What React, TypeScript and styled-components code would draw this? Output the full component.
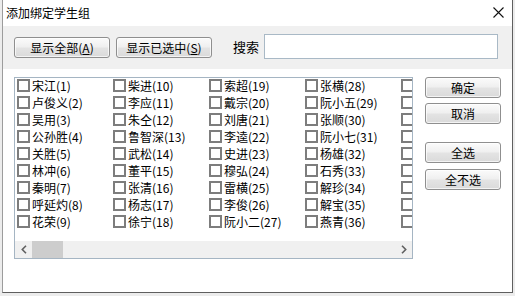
import React from 'react';
import styled, { createGlobalStyle } from 'styled-components';

const GlobalStyle = createGlobalStyle`
  html, body {
    margin: 0;
    padding: 0;
    background-color: #ececec;
    font-family: 'Noto Sans CJK SC', 'Noto Sans', sans-serif;
    font-size: 12px;
    color: #000;
  }
`;

const names = [
  '宋江', '卢俊义', '吴用', '公孙胜', '关胜', '林冲', '秦明', '呼延灼', '花荣',
  '柴进', '李应', '朱仝', '鲁智深', '武松', '董平', '张清', '杨志', '徐宁',
  '索超', '戴宗', '刘唐', '李逵', '史进', '穆弘', '雷横', '李俊', '阮小二',
  '张横', '阮小五', '张顺', '阮小七', '杨雄', '石秀', '解珍', '解宝', '燕青',
  '朱武', '黄信', '孙立', '宣赞', '郝思文', '韩滔', '彭玘', '单廷珪', '魏定国',
];

const Window = styled.div`
  box-sizing: border-box;
  margin-left: 2px;
  width: 511px;
  height: 293px;
  display: flex;
  flex-direction: column;
  background-color: #fff;
  border-left: 1px solid #9c9c9c;
  border-right: 1px solid #5f5f5f;
  border-bottom: 1px solid #5f5f5f;
`;

const TitleBar = styled.div`
  height: 26px;
  display: flex;
  flex-direction: row;
  align-items: center;
  justify-content: space-between;
  padding: 0 8px 0 3px;
  background-color: #fff;
`;

const Title = styled.span`
  font-size: 12px;
  line-height: 18px;
  margin-top: -1px;
`;

const CloseButton = styled.div`
  width: 12px;
  height: 12px;
  display: flex;
  align-items: center;
  justify-content: center;
  margin-top: -1px;
`;

const Toolbar = styled.div`
  height: 43px;
  display: flex;
  flex-direction: row;
  align-items: center;
  padding-left: 11px;
  background-color: #f0f0f0;
`;

const Button = styled.div<{ $width: number; $mt?: number }>`
  box-sizing: border-box;
  width: ${(p) => p.$width}px;
  height: 21px;
  margin-top: ${(p) => p.$mt ?? 0}px;
  display: flex;
  align-items: center;
  justify-content: center;
  border: 1px solid #8f8f8f;
  border-radius: 3px;
  background: linear-gradient(#fbfbfb 0%, #f0f0f0 45%, #e3e3e3 55%, #dadada 100%);
  box-shadow: inset 0 0 0 1px rgba(255, 255, 255, 0.7);
  font-size: 12px;
  line-height: 17px;
  white-space: nowrap;
  cursor: pointer;

  u {
    text-decoration-thickness: 1px;
    text-underline-offset: 1px;
  }
`;

const ToolGap = styled.div<{ $w: number }>`
  width: ${(p) => p.$w}px;
`;

const SearchLabel = styled.span`
  font-size: 13px;
  line-height: 18px;
  margin-top: -2px;
`;

const SearchInput = styled.input`
  box-sizing: border-box;
  width: 234px;
  height: 25px;
  margin-left: 5px;
  margin-top: -2px;
  border: 1px solid #a9b9c6;
  background-color: #fff;
  outline: none;
  padding: 0 4px;
  font-family: inherit;
  font-size: 12px;
`;

const Content = styled.div`
  flex: 1;
  display: flex;
  flex-direction: row;
  align-items: flex-start;
  padding: 8px 0 0 11px;
`;

const ListBox = styled.div`
  box-sizing: border-box;
  width: 399px;
  height: 182px;
  display: flex;
  flex-direction: column;
  border: 1px solid #a5b5c3;
  background-color: #fff;
`;

const Viewport = styled.div`
  flex: 1;
  overflow: hidden;
  padding: 0 0 0 2px;
`;

const ItemGrid = styled.div`
  display: grid;
  grid-auto-flow: column;
  grid-template-rows: repeat(9, 17px);
  grid-auto-columns: 96px;
  margin-top: -1px;
`;

const Item = styled.div`
  display: flex;
  flex-direction: row;
  align-items: center;
  white-space: nowrap;
`;

const CheckBox = styled.div`
  box-sizing: border-box;
  flex: none;
  width: 13px;
  height: 13px;
  border: 2px solid #7d7d7d;
  background-color: #fff;
  margin-right: 2px;
`;

const ItemLabel = styled.span`
  font-size: 12px;
  line-height: 17px;
`;

const HScrollbar = styled.div`
  height: 17px;
  display: flex;
  flex-direction: row;
  align-items: stretch;
  background-color: #f0f0f0;
`;

const ArrowButton = styled.div`
  width: 17px;
  display: flex;
  align-items: center;
  justify-content: center;
`;

const Track = styled.div`
  flex: 1;
  display: flex;
  flex-direction: row;
`;

const Thumb = styled.div`
  width: 31px;
  background-color: #cdcdcd;
`;

const SidePanel = styled.div`
  display: flex;
  flex-direction: column;
  margin-left: 12px;
`;

const Chevron: React.FC<{ dir: 'left' | 'right' }> = ({ dir }) => (
  <svg width="6" height="9" viewBox="0 0 6 9">
    <path
      d={dir === 'left' ? 'M5 0.8 L1.3 4.5 L5 8.2' : 'M1 0.8 L4.7 4.5 L1 8.2'}
      fill="none"
      stroke="#606060"
      strokeWidth="1.6"
    />
  </svg>
);

const App: React.FC = () => {
  return (
    <>
      <GlobalStyle />
      <Window>
        <TitleBar>
          <Title>添加绑定学生组</Title>
          <CloseButton>
            <svg width="11" height="11" viewBox="0 0 11 11">
              <path d="M0.5 0.5 L10.5 10.5 M10.5 0.5 L0.5 10.5" stroke="#111" strokeWidth="1.1" />
            </svg>
          </CloseButton>
        </TitleBar>
        <Toolbar>
          <Button $width={96}>
            显示全部(<u>A</u>)
          </Button>
          <ToolGap $w={6} />
          <Button $width={96}>
            显示已选中(<u>S</u>)
          </Button>
          <ToolGap $w={21} />
          <SearchLabel>搜索</SearchLabel>
          <SearchInput />
        </Toolbar>
        <Content>
          <ListBox>
            <Viewport>
              <ItemGrid>
                {names.map((n, i) => (
                  <Item key={i}>
                    <CheckBox />
                    <ItemLabel>
                      {n}({i + 1})
                    </ItemLabel>
                  </Item>
                ))}
              </ItemGrid>
            </Viewport>
            <HScrollbar>
              <ArrowButton>
                <Chevron dir="left" />
              </ArrowButton>
              <Track>
                <Thumb />
              </Track>
              <ArrowButton>
                <Chevron dir="right" />
              </ArrowButton>
            </HScrollbar>
          </ListBox>
          <SidePanel>
            <Button $width={76}>确定</Button>
            <Button $width={76} $mt={5}>
              取消
            </Button>
            <Button $width={76} $mt={18}>
              全选
            </Button>
            <Button $width={76} $mt={6}>
              全不选
            </Button>
          </SidePanel>
        </Content>
      </Window>
    </>
  );
};

export default App;
